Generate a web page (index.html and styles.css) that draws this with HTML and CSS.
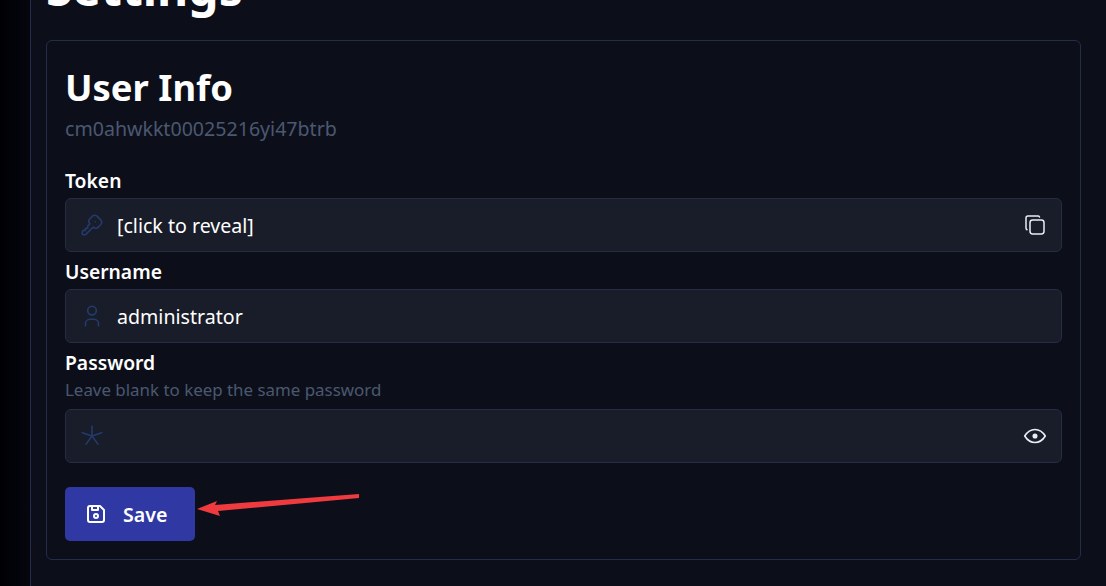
FILE: index.html
```html
<!DOCTYPE html>
<html lang="en">
<head>
    <meta charset="UTF-8">
    <meta name="viewport" content="width=device-width, initial-scale=1.0">
    <title>Settings</title>
    <link rel="stylesheet" href="styles.css">
</head>
<body>

    <div class="sidebar"></div>

    <main class="content">
        <h1 class="page-title">Settings</h1>

        <section class="card">
            <h2 class="card-title">User Info</h2>
            <p class="user-id">cm0ahwkkt00025216yi47btrb</p>

            <form class="fields">
                <div class="field">
                    <label class="field-label">Token</label>
                    <div class="input-box">
                        <svg class="icon icon-left" viewBox="0 0 24 24"><path d="M16.555 3.843l3.602 3.602a2.877 2.877 0 0 1 0 4.069l-2.643 2.643a2.877 2.877 0 0 1 -4.069 0l-.301 -.301l-6.558 6.558a2 2 0 0 1 -1.239 .578l-.175 .008h-1.172a1 1 0 0 1 -.993 -.883l-.007 -.117v-1.172a2 2 0 0 1 .467 -1.284l.119 -.13l.414 -.414h2v-2h2v-2l2.144 -2.144l-.301 -.301a2.877 2.877 0 0 1 0 -4.069l2.643 -2.643a2.877 2.877 0 0 1 4.069 0z"/><path d="M15 9h.01"/></svg>
                        <span class="input-value">[click to reveal]</span>
                        <svg class="icon icon-right icon-copy" viewBox="0 0 24 24"><path d="M7 7m0 2.667a2.667 2.667 0 0 1 2.667 -2.667h8.666a2.667 2.667 0 0 1 2.667 2.667v8.666a2.667 2.667 0 0 1 -2.667 2.667h-8.666a2.667 2.667 0 0 1 -2.667 -2.667z"/><path d="M4.012 16.737a2.005 2.005 0 0 1 -1.012 -1.737v-10c0 -1.1 .9 -2 2 -2h10c.75 0 1.158 .385 1.5 1"/></svg>
                    </div>
                </div>

                <div class="field">
                    <label class="field-label">Username</label>
                    <div class="input-box">
                        <svg class="icon icon-left" viewBox="0 0 24 24"><path d="M8 7a4 4 0 1 0 8 0a4 4 0 0 0 -8 0"/><path d="M6 21v-2a4 4 0 0 1 4 -4h4a4 4 0 0 1 4 4v2"/></svg>
                        <span class="input-value">administrator</span>
                    </div>
                </div>

                <div class="field">
                    <label class="field-label">Password</label>
                    <p class="field-hint">Leave blank to keep the same password</p>
                    <div class="input-box">
                        <svg class="icon icon-left" viewBox="0 0 24 24"><path d="M12 12v-9"/><path d="M12 12l9 -3"/><path d="M12 12l5.500 7.500"/><path d="M12 12l-5.500 7.500"/><path d="M12 12l-9 -3"/></svg>
                        <span class="input-value"></span>
                        <svg class="icon icon-right" viewBox="0 0 24 24"><circle class="pupil" cx="12" cy="12" r="1.600"/><path d="M21.500 12c-2.500 4 -5.700 6 -9.500 6c-3.800 0 -7 -2 -9.500 -6c2.500 -4 5.700 -6 9.500 -6c3.800 0 7 2 9.500 6"/></svg>
                    </div>
                </div>
            </form>

            <button class="save-btn" type="button">
                <svg class="icon" viewBox="0 0 24 24"><path d="M6 4h10l4 4v10a2 2 0 0 1 -2 2h-12a2 2 0 0 1 -2 -2v-12a2 2 0 0 1 2 -2"/><path d="M10 14a2 2 0 1 0 4 0a2 2 0 0 0 -4 0"/><path d="M14 4v4h-6v-4"/></svg>
                <span>Save</span>
            </button>
        </section>
    </main>

    <svg class="arrow" viewBox="0 0 170 30" width="170" height="30"><path class="arrow-head" d="M0 19L20 11L18 15L162 4L162 8L21 21L23 26Z"/></svg>

</body>
</html>
```

FILE: styles.css
```css
* {
    box-sizing: border-box;
}
html, body {
    height: 100%;
}
body {
    margin: 0;
    display: flex;
    overflow: hidden;
    background-color: #0c0f1a;
    color: #fff;
    font-family: "Noto Sans", sans-serif;
}
.sidebar {
    width: 31px;
    flex-shrink: 0;
    background: linear-gradient(to right, #000004, #05060f);
    border-right: 1px solid #232c4a;
}
.content {
    flex: 1;
    padding: 0 25px 0 15px;
}
.page-title {
    margin: -40px 0 24px 0;
    height: 56px;
    font-size: 48px;
    line-height: 56px;
    font-weight: 700;
}
.card {
    height: 520px;
    padding: 20px 18px;
    border: 1px solid #232c4a;
    border-radius: 6px;
}
.card-title {
    margin: 0;
    font-size: 36.4px;
    line-height: 52px;
    font-weight: 700;
}
.user-id {
    margin: 2px 0 0 0;
    font-size: 19.6px;
    line-height: 28px;
    color: #4b5870;
}
.fields {
    margin-top: 24px;
}
.field {
    margin-bottom: 6px;
}
.field-label {
    display: block;
    margin-bottom: 4px;
    font-size: 19.3px;
    line-height: 27px;
    font-weight: 600;
}
.field-hint {
    margin: -2px 0 7px 0;
    font-size: 16.9px;
    line-height: 24px;
    color: #4b5870;
}
.input-box {
    display: flex;
    align-items: center;
    height: 54px;
    padding: 0 13px;
    background-color: #191d29;
    border: 1px solid #252c44;
    border-radius: 6px;
}
.icon {
    width: 26px;
    height: 26px;
    fill: none;
    stroke: currentColor;
    stroke-width: 1.5;
    stroke-linecap: round;
    stroke-linejoin: round;
    flex-shrink: 0;
}
.icon-left {
    color: #243a6b;
}
.icon-right {
    color: #e8edf5;
}
.icon-copy {
    width: 24px;
    height: 24px;
    margin-right: 1px;
}
.pupil {
    fill: currentColor;
}
.input-value {
    flex: 1;
    margin-left: 12px;
    padding-top: 2px;
    font-size: 19.6px;
    line-height: 28px;
}
.save-btn {
    display: flex;
    align-items: center;
    gap: 15px;
    width: 130px;
    height: 54px;
    margin-top: 24px;
    padding: 0 19px;
    background-color: #3038a3;
    border: none;
    border-radius: 5px;
    color: #fff;
    font-family: inherit;
    font-size: 19.6px;
    font-weight: 600;
}
.save-btn .icon {
    width: 24px;
    height: 24px;
    stroke-width: 2;
}
.arrow {
    position: absolute;
    left: 197px;
    top: 490px;
}
.arrow-head {
    fill: #ef3b3f;
}
```
